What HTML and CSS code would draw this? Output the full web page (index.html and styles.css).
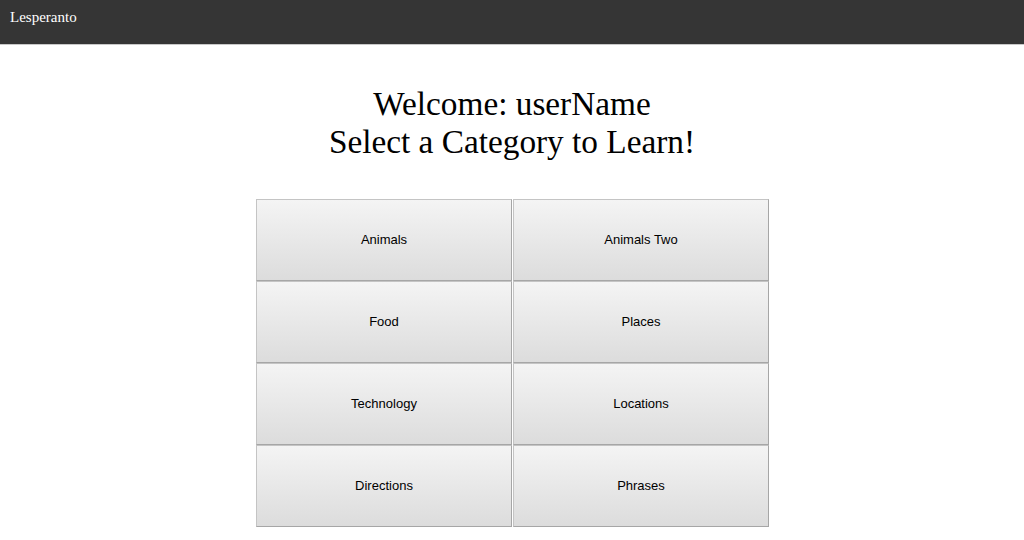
FILE: index.html
```html
<!DOCTYPE html>
<html>
<head>
<meta charset="utf-8">
<link rel="stylesheet" href="styles.css">
</head>
<body>
<header class="topbar">
  <span class="brand">Lesperanto</span>
</header>
<main class="content">
  <h1 class="title">Welcome: userName<br>Select a Category to Learn!</h1>
  <div class="grid">
    <button class="cat">Animals</button>
    <button class="cat">Animals Two</button>
    <button class="cat">Food</button>
    <button class="cat">Places</button>
    <button class="cat">Technology</button>
    <button class="cat">Locations</button>
    <button class="cat">Directions</button>
    <button class="cat">Phrases</button>
  </div>
</main>
</body>
</html>
```

FILE: styles.css
```css
html, body {
  margin: 0;
  padding: 0;
  background: #ffffff;
  font-family: "Liberation Serif", "Times New Roman", serif;
}

.topbar {
  height: 44px;
  background: #353535;
  border-bottom: 1px solid #c8c8c8;
  box-sizing: content-box;
  display: flex;
  align-items: flex-start;
  padding: 0 10px;
}

.brand {
  color: #ffffff;
  font-size: 15px;
  line-height: 17px;
  margin-top: 9px;
}

.content {
  display: flex;
  flex-direction: column;
  align-items: center;
}

.title {
  margin: 40px 0 38px 0;
  font-weight: normal;
  font-size: 33.3px;
  line-height: 38px;
  text-align: center;
  color: #000;
}

.grid {
  display: grid;
  grid-template-columns: 256px 256px;
  grid-auto-rows: 82px;
  column-gap: 1px;
  margin-left: 1px;
}

.cat {
  margin: 0;
  box-sizing: border-box;
  border: 1px solid #a6a6a6;
  border-top-color: #c4c4c4;
  border-left-color: #c4c4c4;
  background: linear-gradient(to bottom, #f4f4f4, #dcdcdc);
  font-family: "Liberation Sans", Arial, sans-serif;
  font-size: 13px;
  color: #000;
  padding: 0 0 1px 0;
}
```
